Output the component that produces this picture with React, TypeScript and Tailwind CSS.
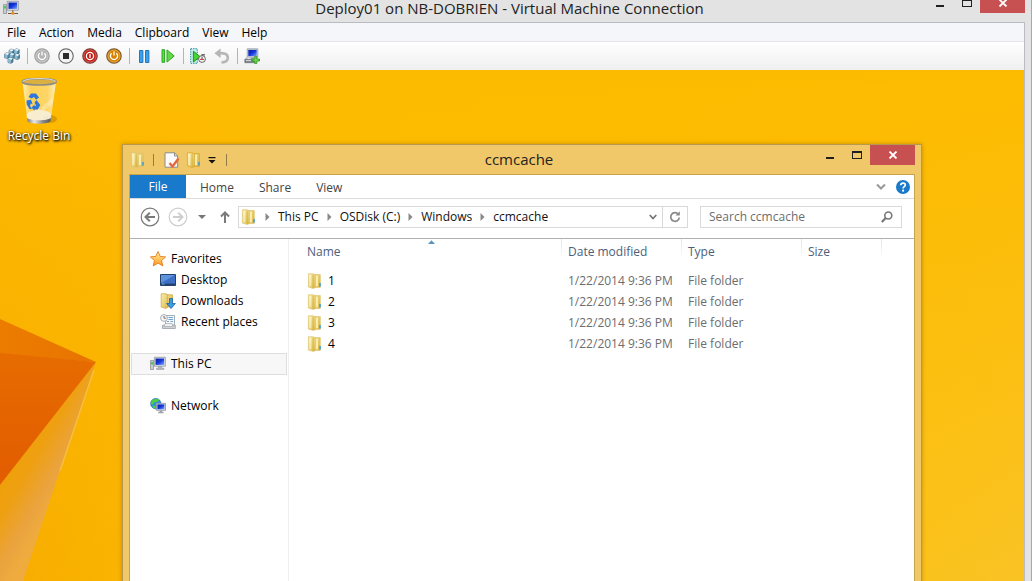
import type { ReactNode } from 'react';

function SharedGradients() {
  return (
    <svg className="absolute size-0" aria-hidden="true">
      <defs>
        <linearGradient id="folderBack" x1="0" y1="0" x2="1" y2="1">
          <stop offset="0" stopColor="#f3e296" />
          <stop offset="1" stopColor="#d9b23e" />
        </linearGradient>
        <linearGradient id="folderFront" x1="0" y1="0" x2="1" y2="1">
          <stop offset="0" stopColor="#fbf0b0" />
          <stop offset="1" stopColor="#dcb945" />
        </linearGradient>
        <linearGradient id="screenBlue" x1="0" y1="0" x2="1" y2="1">
          <stop offset="0" stopColor="#0a1fa8" />
          <stop offset="0.5" stopColor="#1436d8" />
          <stop offset="1" stopColor="#7fa6ff" />
        </linearGradient>
        <linearGradient id="starFill" x1="0" y1="0" x2="0" y2="1">
          <stop offset="0" stopColor="#fff3a0" />
          <stop offset="1" stopColor="#ff9a1e" />
        </linearGradient>
      </defs>
    </svg>
  );
}

function Folder({ outlined = false }: { outlined?: boolean }) {
  const edge = outlined ? '#d9a01a' : '#dcc26c';
  return (
    <svg className="size-4 shrink-0" viewBox="0 0 16 16" aria-hidden="true">
      <path d="M7 1.6h6.300v12.800H7z" fill="url(#folderBack)" stroke={edge} strokeWidth="0.7" />
      <path d="M8 2.800h3v10.500H8z" fill="#fbf2b8" opacity="0.85" />
      <path d="M12.200 10h1.600v3.600h-1.600z" fill="#3f9fe0" />
      <path d="M1.400.8H6l2.400 1v12.600L6.600 15.600 1.400 14z" fill="url(#folderFront)" stroke={edge} strokeWidth="0.7" />
      <path d="M2.300 1.800h2v11.400h-2z" fill="#fffbe0" opacity="0.55" />
      <path d="M6.100 1.800v13.200" stroke="#d3ad38" strokeWidth="0.8" />
    </svg>
  );
}

function Computer({ network = false }: { network?: boolean }) {
  return (
    <svg className="size-4 shrink-0" viewBox="0 0 16 16" aria-hidden="true">
      <path d="M.5 4.5h3v9h-3z" fill="#c9ccd0" stroke="#84898f" strokeWidth="0.7" />
      <path d="M1.2 6h1.6v2.6H1.2z" fill="#36c23a" />
      <path d="M4.3 1.3h11v8.9h-11z" fill="#dfe4ea" stroke="#7f8790" strokeWidth="0.7" />
      <path d="M5.5 2.5h8.6v6.4H5.5z" fill="url(#screenBlue)" />
      {network ? (
        <>
          <path d="M9.8 10.3v3M5 13.5h10" stroke="#6f5a3c" strokeWidth="1" />
          <circle cx="9.8" cy="13.3" r="1.5" fill="#f08a1c" />
        </>
      ) : (
        <path d="M8.5 10.4h3l.5 1.8h2V13.5H6.4v-1.3h1.8z" fill="#aeb4bb" stroke="#858c94" strokeWidth="0.4" />
      )}
    </svg>
  );
}

function Star() {
  return (
    <svg className="size-4 shrink-0" viewBox="0 0 16 16" aria-hidden="true">
      <path d="m8 .5 2.2 4.900 5.400.5-4.100 3.600 1.300 5.400L8 12.100l-4.800 2.800 1.300-5.400L.4 5.900l5.400-.5z" fill="url(#starFill)" stroke="#e9781c" strokeWidth="0.9" strokeLinejoin="round" />
    </svg>
  );
}

function DesktopIcon() {
  return (
    <svg className="size-4 shrink-0" viewBox="0 0 16 16" aria-hidden="true">
      <path d="M.5 2.5h15v11H.5z" fill="#3c70c4" stroke="#26406c" />
      <path d="M1 3h14L1 11z" fill="#5d93dd" />
      <path d="M1 11.6h14V13H1z" fill="#24406d" />
      <path d="M2 12h2.5" stroke="#8ad0ff" strokeWidth="0.8" />
    </svg>
  );
}

function Downloads() {
  return (
    <svg className="size-4 shrink-0" viewBox="0 0 16 16" aria-hidden="true">
      <path d="M6 1.800h6.500v12H6z" fill="url(#folderBack)" stroke="#cfab48" strokeWidth="0.8" />
      <path d="M1.200.8H6l1.600 1v12.600l-1.800 1.100-4.600-1.500z" fill="url(#folderFront)" stroke="#cfab48" strokeWidth="0.8" />
      <path d="M9.500 5.500h3v5h2.900L11 15.500l-4.400-5h2.900z" fill="#3f9ae0" stroke="#1b66ad" strokeWidth="0.8" />
    </svg>
  );
}

function RecentPlaces() {
  return (
    <svg className="size-4 shrink-0" viewBox="0 0 16 16" aria-hidden="true">
      <path d="M5.5 1.5h9v9.8h-9z" fill="#f4f8fb" stroke="#8f9aa5" strokeWidth="0.8" />
      <path d="M8.5 3.5H13M8.5 5.5H13M7 7.5h2M10.5 7.5H13" stroke="#6ba4d2" strokeWidth="1" />
      <path d="M2.5 11.2h12.8v3.3H2.5z" fill="#cfd3d6" stroke="#9a9fa4" strokeWidth="0.8" />
      <path d="M5 9.5h7l1 3H4z" fill="#eef0f2" stroke="#9aa0a6" strokeWidth="0.6" />
      <circle cx="4" cy="4" r="3.4" fill="#f7f7f7" stroke="#a0a4a8" strokeWidth="0.9" />
      <path d="M4 2v2.2h1.8" fill="none" stroke="#4a4f55" strokeWidth="0.8" />
    </svg>
  );
}

function NetworkIcon() {
  return (
    <svg className="size-4 shrink-0" viewBox="0 0 16 16" aria-hidden="true">
      <circle cx="5.800" cy="5.600" r="5.200" fill="#2c8fe0" stroke="#1d5a9f" strokeWidth="0.6" />
      <path d="M2 2.600C4 .7 8 .6 9.200 2L7 4 4 4.400 2.800 6.800.8 6zM3 7.500l3 .6L5.500 10.600 2.600 9.500z" fill="#4fd03d" />
      <path d="M6.300 5.300h9.200v7H6.300z" fill="#d6dbe2" stroke="#7e8791" strokeWidth="0.7" />
      <path d="M7.400 6.400h7v4.800h-7z" fill="url(#screenBlue)" />
      <path d="M9.700 12.400h2.400v1.400h1.500v1.400H8.200v-1.400h1.500z" fill="#9ba2aa" />
    </svg>
  );
}

function Cluster() {
  return (
    <svg className="size-4" viewBox="0 0 16 16" aria-hidden="true" stroke="#2d5266" strokeWidth="0.6" strokeLinejoin="round">
      {[[5, 1], [10.2, 0.8], [0.4, 4.8], [5.6, 5], [10.6, 5.8], [4, 9.6]].map(([x, y]) => (
        <g key={`${x}-${y}`}>
          <path d={`M${x} ${y + 1.4}l2-1.400 3 .8v3.600l-2 1.300-3-.8z`} fill="#4d86a3" />
          <path d={`M${x} ${y + 1.4}l2-1.400 3 .8-2 1.600z`} fill="#e4f3fa" stroke="none" />
          <path d={`M${x} ${y + 1.4}l3 .9v3.400l-3-.8z`} fill="#8bb8cd" stroke="none" />
        </g>
      ))}
    </svg>
  );
}

function RoundIcon({ kind }: { kind: 'start' | 'stop' | 'shutdown' | 'save' }) {
  const face = { start: '#b3b3b3', stop: '#f3f3f3', shutdown: '#c2190f', save: '#d98200' }[kind];
  const rim = { start: '#9f9f9f', stop: '#6b6b6b', shutdown: '#7e3a34', save: '#7c5a28' }[kind];
  return (
    <svg className="size-4" viewBox="0 0 16 16" aria-hidden="true">
      <circle cx="8" cy="8" r="7.2" fill={face} stroke={rim} strokeWidth="1.2" />
      <circle cx="8" cy="8" r="6.1" fill="none" stroke="#fff" strokeWidth="0.6" opacity="0.5" />
      {kind === 'stop' && <path d="M5 5h6v6H5z" fill="#2c2c2c" />}
      {kind === 'shutdown' && (
        <g fill="none" stroke="#fff" strokeWidth="1.3">
          <circle cx="8" cy="8" r="3.6" />
          <path d="M8 6v4" />
        </g>
      )}
      {(kind === 'start' || kind === 'save') && (
        <path d="M8 3.6v4M5.6 5.2a3.6 3.6 0 1 0 4.8 0" fill="none" stroke="#fff" strokeWidth="1.3" />
      )}
    </svg>
  );
}

function Pause() {
  return (
    <svg className="size-4" viewBox="0 0 16 16" aria-hidden="true" fill="#35a2f0" stroke="#1b6cb5" strokeWidth="0.9">
      <path d="M3.5 2.500h3.400v12H3.500zM9.500 2.500h3.400v12H9.500z" />
    </svg>
  );
}

function Resume() {
  return (
    <svg className="size-4" viewBox="0 0 16 16" aria-hidden="true" fill="#5fd945" stroke="#2ba823" strokeWidth="1">
      <path d="M2 1.7h2.6v12.6H2zM7 1.9 14.2 8 7 14.1z" />
    </svg>
  );
}

function Checkpoint() {
  return (
    <svg className="size-4" viewBox="0 0 16 16" aria-hidden="true">
      <path d="M.7.7h6.600v14.600H.7z" fill="#c4eef0" stroke="#2f8b93" strokeDasharray="1.400 1" />
      <path d="M3.400 3.200 10 8.600l-6.600 5.400z" fill="#45d52f" stroke="#118a16" strokeWidth="0.9" />
      <circle cx="12" cy="11" r="3.400" fill="#f8f8f8" stroke="#555" strokeWidth="0.9" />
      <path d="M10 11.400h4" stroke="#d0342c" />
      <path d="M12 8.800v2.400" stroke="#222" strokeWidth="0.8" />
      <path d="M11.500 6.800h3.400" stroke="#444" strokeWidth="1.2" />
    </svg>
  );
}

function Revert() {
  return (
    <svg className="size-4" viewBox="0 0 16 16" aria-hidden="true">
      <path d="M4.500 5.200c5-.4 9.300.4 9.300 4.600 0 2.900-2.400 4.600-6.300 4.600" fill="none" stroke="#b6b6b6" strokeWidth="2.600" />
      <path d="M6.600.4v9.600L.4 5.200z" fill="#b6b6b6" />
    </svg>
  );
}

function EnhancedSession() {
  return (
    <svg className="size-4" viewBox="0 0 16 16" aria-hidden="true">
      <path d="M3.200.8h10.600v8.400H3.200z" fill="#cfd5dd" stroke="#8a9098" strokeWidth="0.7" />
      <path d="M4.300 1.900h8.400v6.200H4.300z" fill="url(#screenBlue)" />
      <path d="M6.500 9.400h4v1.800h-4z" fill="#a5abb2" />
      <path d="M1.500 9.500h2v2h-2z" fill="#b8bdc3" />
      <path d="M.8 11.300h9.500v3.400H.8z" fill="#7d848c" stroke="#5a6067" strokeWidth="0.6" />
      <path d="M2 12.500h5" stroke="#d3d7dc" />
      <path d="M10.800 8.300h2v2.700h2.700v2h-2.700v2.700h-2V13H8.100v-2h2.700z" fill="#6fdc48" stroke="#2c8f1d" strokeWidth="0.8" />
    </svg>
  );
}

function RecycleBin() {
  return (
    <svg className="h-12 w-10" viewBox="0 0 40 48" aria-hidden="true">
      <defs>
        <linearGradient id="binGlass" x1="0" y1="0" x2="1" y2="0">
          <stop offset="0" stopColor="#fff" stopOpacity="0.75" />
          <stop offset="0.25" stopColor="#fff" stopOpacity="0.35" />
          <stop offset="0.75" stopColor="#fff" stopOpacity="0.4" />
          <stop offset="1" stopColor="#fff" stopOpacity="0.75" />
        </linearGradient>
        <linearGradient id="binBase" x1="0" y1="0" x2="1" y2="0">
          <stop offset="0" stopColor="#777" />
          <stop offset="0.3" stopColor="#e9e9e9" />
          <stop offset="0.65" stopColor="#8d8d8d" />
          <stop offset="1" stopColor="#555" />
        </linearGradient>
      </defs>
      <ellipse cx="31" cy="42" rx="7" ry="4" fill="#a56f00" opacity="0.4" />
      <path d="M3.500 5 8.400 43c3 3.400 20.200 3.400 23.200 0L37 5z" fill="url(#binGlass)" />
      <path d="M7.500 37c4-4 8-3 12-5 5 2 9 1 12.500 5l-.8 6c-3 3-20 3-23 0z" fill="#f5f5f5" opacity="0.75" />
      <path d="M34 20 22 31l2 3 9-7z" fill="#fff" opacity="0.3" />
      <path d="M8 41c4 3 20 3 24 0l-.6 3.600c-4 3-18.800 3-22.800 0z" fill="url(#binBase)" />
      <ellipse cx="20.200" cy="4.800" rx="17" ry="3.200" fill="#dbb040" stroke="#8c8c86" strokeWidth="1.600" />
      <path d="M3.500 4.500c4-4 29-4 33.500 0" fill="none" stroke="#e4e4e4" strokeWidth="0.9" />
      <g fill="#2d77dc">
        <path d="m9.500 20 2.500-3.600h5l3 4-3 2.400-2-2.800-2.500 1.600z" />
        <path d="m7.500 23.500 4.500-.8 1.600 4.600-1.800-.8-.8 2.400 2 3H10.500l-2.800-4.400z" />
        <path d="m17.500 23 3.800 5-2.500 4.500h-3.300v1.300l-3-3.300 3-3v1.500h1.700l-1.700-3.600z" />
      </g>
    </svg>
  );
}

function MinimizeGlyph() {
  return (
    <svg className="h-2 w-2.5" viewBox="0 0 10 8" aria-hidden="true">
      <path d="M1 6h8v2H1z" fill="#1f1f1f" />
    </svg>
  );
}

function MaximizeGlyph() {
  return (
    <svg className="h-2 w-2.5" viewBox="0 0 10 8" aria-hidden="true">
      <path d="M0 0h10v8H0zM1 2v5h8V2z" fill="#1f1f1f" fillRule="evenodd" />
    </svg>
  );
}

function CloseGlyph() {
  return (
    <svg className="h-2 w-2.5" viewBox="0 0 10 8" aria-hidden="true">
      <path d="m1.500.5 7 7m0-7-7 7" stroke="#fff" strokeWidth="1.800" />
    </svg>
  );
}

function WindowButtons() {
  return (
    <div className="flex h-5 justify-self-end">
      <button aria-label="Minimize" className="flex w-[27px] items-center justify-center"><MinimizeGlyph /></button>
      <button aria-label="Maximize" className="flex w-[27px] items-center justify-center"><MaximizeGlyph /></button>
      <button aria-label="Close" className="flex w-[45px] items-center justify-center bg-[#c75050]"><CloseGlyph /></button>
    </div>
  );
}

function ToolButton({ label, children }: { label: string; children: ReactNode }) {
  return (
    <button aria-label={label} className="flex size-6 shrink-0 items-center justify-center">
      {children}
    </button>
  );
}

function ToolSeparator() {
  return (
    <span className="flex w-1.5 shrink-0 justify-center">
      <span className="h-4 w-px bg-[#b4b4b4]" />
    </span>
  );
}

function ConnectionBars() {
  return (
    <>
      <header className="grid h-[22px] shrink-0 grid-cols-[1fr_auto_1fr] pr-1.5">
        <span className="pl-[3px]"><Computer network /></span>
        <h1 className="h-4 pr-1.5 text-[15px] leading-4 text-[#222]">Deploy01 on NB-DOBRIEN - Virtual Machine Connection</h1>
        <div className="-mt-[7px] flex justify-end"><WindowButtons /></div>
      </header>
      <div className="mr-1.5 shrink-0 border-t border-r border-[#b9bcc0]">
        <nav aria-label="Menu" className="flex h-[19px] items-end gap-[13px] border-b border-[#e4e6e9] bg-[#f4f6f9] pl-[7px] leading-4">
          {['File', 'Action', 'Media', 'Clipboard', 'View', 'Help'].map((item) => (
            <button key={item}>{item}</button>
          ))}
        </nav>
        <div role="toolbar" className="flex h-7 items-center bg-linear-to-b from-white to-[#efefef]">
          <ToolButton label="Ctrl+Alt+Delete"><Cluster /></ToolButton>
          <ToolSeparator />
          <ToolButton label="Start"><RoundIcon kind="start" /></ToolButton>
          <ToolButton label="Turn off"><RoundIcon kind="stop" /></ToolButton>
          <ToolButton label="Shut down"><RoundIcon kind="shutdown" /></ToolButton>
          <ToolButton label="Save"><RoundIcon kind="save" /></ToolButton>
          <ToolSeparator />
          <ToolButton label="Pause"><Pause /></ToolButton>
          <ToolButton label="Reset"><Resume /></ToolButton>
          <ToolSeparator />
          <ToolButton label="Checkpoint"><Checkpoint /></ToolButton>
          <ToolButton label="Revert"><Revert /></ToolButton>
          <ToolSeparator />
          <ToolButton label="Enhanced session"><EnhancedSession /></ToolButton>
        </div>
      </div>
    </>
  );
}

function Wallpaper() {
  return (
    <svg className="absolute top-[240px] left-0 h-[350px] w-[100px]" viewBox="0 0 100 350" aria-hidden="true">
      <defs>
        <linearGradient id="facetTop" x1="0" y1="0" x2="1" y2="0">
          <stop offset="0" stopColor="#ec7c00" />
          <stop offset="1" stopColor="#e87400" />
        </linearGradient>
        <linearGradient id="facetDark" x1="0" y1="0" x2="0" y2="1">
          <stop offset="0" stopColor="#e66c00" />
          <stop offset="1" stopColor="#e25c00" />
        </linearGradient>
        <linearGradient id="facetPale" gradientUnits="userSpaceOnUse" x1="10" y1="150" x2="62" y2="180">
          <stop offset="0" stopColor="#eea008" />
          <stop offset="0.35" stopColor="#eea012" />
          <stop offset="0.75" stopColor="#eaa33e" />
          <stop offset="1" stopColor="#efab3e" />
        </linearGradient>
      </defs>
      <path d="M96 52 0 175v165z" fill="url(#facetPale)" />
      <path d="M96 52 0 9v36z" fill="url(#facetTop)" />
      <path d="M0 43 96 52 0 175z" fill="url(#facetDark)" />
      <path d="M94 60 60 161" stroke="#f7c250" strokeWidth="1.500" opacity="0.8" />
    </svg>
  );
}

function TitleBar() {
  return (
    <div className="grid h-[29px] grid-cols-[1fr_auto_1fr]">
      <div className="flex h-[29px] items-center pl-px">
        <Folder />
        <span className="ml-[7px] h-3 w-px bg-[#8f7a48]" />
        <button aria-label="Properties" className="ml-2.5">
          <svg className="size-4" viewBox="0 0 16 16" aria-hidden="true">
            <path d="M1 .8h9.500l3.200 3.200v11.200H1z" fill="#fbfbfb" stroke="#8b8b8b" />
            <path d="M10.500.8V4h3.200" fill="none" stroke="#8b8b8b" />
            <path d="m5.500 11 3 3.500L14.500 6.500" fill="none" stroke="#e8673c" strokeWidth="2.400" />
          </svg>
        </button>
        <button aria-label="New folder" className="ml-1.5"><Folder outlined /></button>
        <button aria-label="Customize Quick Access Toolbar" className="ml-1.5">
          <svg className="h-2 w-2" viewBox="0 0 8 8" aria-hidden="true">
            <path d="M.5 1h7v1.200h-7zM.5 4h7L4 7.500z" fill="#111" />
          </svg>
        </button>
        <span className="ml-2.5 h-3 w-px bg-[#8f7a48]" />
      </div>
      <h2 className="pr-1.5 text-[15px] leading-7 text-[#222]">ccmcache</h2>
      <WindowButtons />
    </div>
  );
}

function Ribbon() {
  return (
    <div className="flex h-6 items-stretch border-b border-[#dadbdc] text-[#444]">
      <button className="w-14 bg-[#1979ca] text-white">File</button>
      <div className="ml-[14px] flex flex-1 items-center gap-[25px] pt-0.5">
        <button>Home</button>
        <button>Share</button>
        <button>View</button>
      </div>
      <button aria-label="Expand the Ribbon">
        <svg className="h-2 w-2.5" viewBox="0 0 10 8" aria-hidden="true">
          <path d="m1 1.500 4 4 4-4" fill="none" stroke="#999" strokeWidth="2" />
        </svg>
      </button>
      <button aria-label="Help" className="mr-1 ml-2.5">
        <svg className="size-[14px]" viewBox="0 0 14 14" aria-hidden="true">
          <circle cx="7" cy="7" r="7" fill="#1979ca" />
          <path d="M4.800 5.300C4.800 2.300 9.300 2.400 9.300 5c0 1.700-2.200 1.700-2.200 3.500" fill="none" stroke="#fff" strokeWidth="1.700" />
          <circle cx="7.100" cy="10.700" r="1.100" fill="#fff" />
        </svg>
      </button>
    </div>
  );
}

function RoundArrow({ faded = false }: { faded?: boolean }) {
  return (
    <svg className={faded ? 'size-5 rotate-180' : 'size-5'} viewBox="0 0 20 20" aria-hidden="true" fill="none" stroke={faded ? '#cecece' : '#7a7a7a'}>
      <circle cx="10" cy="10" r="8.800" strokeWidth="1.200" />
      <path d="M5.800 10H15M9.800 5.700 5.500 10l4.300 4.300" strokeWidth="2" />
    </svg>
  );
}

function Crumb({ label }: { label: string }) {
  return (
    <>
      <svg className="h-2 w-[5px] shrink-0" viewBox="0 0 5 8" aria-hidden="true">
        <path d="M.5 0 4.500 4l-4 4z" fill="#888" />
      </svg>
      <a href="#" className="text-[#111]">{label}</a>
    </>
  );
}

function AddressBar() {
  return (
    <div className="flex h-10 items-center border-b border-[#b0b0b0] px-[10px] pb-[3px]">
      <button aria-label="Back"><RoundArrow /></button>
      <button aria-label="Forward" className="ml-2"><RoundArrow faded /></button>
      <button aria-label="Recent locations" className="ml-2.5">
        <svg className="h-1 w-2" viewBox="0 0 8 4" aria-hidden="true"><path d="M0 0h8L4 4z" fill="#777" /></svg>
      </button>
      <button aria-label="Up" className="ml-3.5">
        <svg className="h-3 w-2.5" viewBox="0 0 10 12" aria-hidden="true" fill="none" stroke="#7a7a7a" strokeWidth="2">
          <path d="M5 12V1.800M1 5.500l4-4 4 4" />
        </svg>
      </button>
      <div className="ml-2 flex h-[22px] min-w-0 flex-1 items-stretch border border-[#d9d9d9]">
        <div className="flex min-w-0 flex-1 items-center gap-2 pl-0.5">
          <Folder />
          {['This PC', 'OSDisk (C:)', 'Windows', 'ccmcache'].map((label) => (
            <Crumb key={label} label={label} />
          ))}
        </div>
        <button aria-label="Previous locations" className="px-[5px]">
          <svg className="h-1.5 w-2" viewBox="0 0 8 6" aria-hidden="true"><path d="m.7 1 3.300 3.500L7.300 1" fill="none" stroke="#777" strokeWidth="1.800" /></svg>
        </button>
        <button aria-label="Refresh" className="flex w-[25px] items-center justify-center border-l border-[#d9d9d9]">
          <svg className="size-3" viewBox="0 0 12 12" aria-hidden="true">
            <path d="M9.300 3.200A4.300 4.300 0 1 0 10.300 6.500" fill="none" stroke="#888" strokeWidth="1.700" />
            <path d="M6.500 4.500h4.300V.3z" fill="#888" />
          </svg>
        </button>
      </div>
      <div className="mr-[2px] ml-3 flex h-[22px] w-[202px] items-center border border-[#d9d9d9] pr-2 pl-2">
        <input aria-label="Search ccmcache" placeholder="Search ccmcache" className="min-w-0 flex-1 outline-none placeholder:text-[#6d6d6d]" />
        <svg className="size-3 shrink-0" viewBox="0 0 12 12" aria-hidden="true" fill="none" stroke="#777">
          <circle cx="7.300" cy="4.500" r="3.500" strokeWidth="1.600" />
          <path d="M4.800 7 .8 11" strokeWidth="2.200" />
        </svg>
      </div>
    </div>
  );
}

function TreeItem({ icon, label, nested = false }: { icon: ReactNode; label: string; nested?: boolean }) {
  return (
    <a href="#" className={nested ? 'flex h-[21px] items-center gap-[5px] pl-[30px]' : 'flex h-[21px] items-center gap-[5px] pl-5'}>
      {icon}
      {label}
    </a>
  );
}

function NavigationPane() {
  return (
    <nav aria-label="Locations" className="w-[159px] shrink-0 border-r border-[#f0f0f0] pt-[9px] whitespace-nowrap">
      <TreeItem icon={<Star />} label="Favorites" />
      <TreeItem nested icon={<DesktopIcon />} label="Desktop" />
      <TreeItem nested icon={<Downloads />} label="Downloads" />
      <TreeItem nested icon={<RecentPlaces />} label="Recent places" />
      <a href="#" className="mt-[21px] mr-px ml-px flex h-[22px] items-center gap-[5px] border border-[#dedede] bg-[#f7f7f7] pl-[18px]">
        <Computer />
        This PC
      </a>
      <div className="mt-5"><TreeItem icon={<NetworkIcon />} label="Network" /></div>
    </nav>
  );
}

const columnLine = 'bg-[linear-gradient(#dbe6f2,#fff)] bg-[length:1px_20px] bg-right-top bg-no-repeat';

function FileTable() {
  return (
    <div className="min-w-0 flex-1">
      <table className="w-full table-fixed text-left">
        <colgroup>
          <col className="w-[273px]" />
          <col className="w-[120px]" />
          <col className="w-[120px]" />
          <col className="w-[80px]" />
          <col />
        </colgroup>
        <thead className="text-[#4c607a]">
          <tr className="h-[31px]">
            <th className={`relative pb-[5px] pl-[18px] font-normal ${columnLine}`}>
              Name
              <svg className="absolute top-px left-[139px] h-1 w-[7px]" viewBox="0 0 7 4" aria-hidden="true"><path d="M0 4h7L3.500.3z" fill="#5b93b8" /></svg>
            </th>
            <th className={`pb-[5px] pl-1.5 font-normal ${columnLine}`}>Date modified</th>
            <th className={`pb-[5px] pl-1.5 font-normal ${columnLine}`}>Type</th>
            <th className={`pb-[5px] pl-1.5 font-normal ${columnLine}`}>Size</th>
            <td />
          </tr>
        </thead>
        <tbody className="text-[#6d6d6d]">
          {['1', '2', '3', '4'].map((name) => (
            <tr key={name} className="h-[21px]">
              <td className="pl-[18px] text-black">
                <span className="flex items-center gap-[5px]"><Folder />{name}</span>
              </td>
              <td className="pl-1.5 whitespace-nowrap">1/22/2014 9:36 PM</td>
              <td className="pl-1.5">File folder</td>
              <td />
              <td />
            </tr>
          ))}
        </tbody>
      </table>
    </div>
  );
}

function ExplorerWindow() {
  return (
    <section className="absolute top-[74px] right-[102px] -bottom-2 left-[122px] flex flex-col border border-[#b8984c] bg-[#f0c869] px-1.5 shadow-[0_0_4px_rgba(120,80,0,0.45)]">
      <TitleBar />
      <div className="flex flex-1 flex-col border border-[#c9a44d] bg-white">
        <Ribbon />
        <AddressBar />
        <div className="flex flex-1">
          <NavigationPane />
          <FileTable />
        </div>
      </div>
    </section>
  );
}

export default function App() {
  return (
    <div className="flex h-screen flex-col overflow-hidden border-r border-[#a8a8a8] bg-[#e3e3e3] font-['Open_Sans','Noto_Sans',sans-serif] text-[12px] leading-4 text-black">
      <SharedGradients />
      <ConnectionBars />
      <main className="relative mr-1.5 flex-1 overflow-hidden border-r border-[#b9bcc0] bg-[linear-gradient(100deg,#f6a700_0%,#fcbb00_30%,#fdc000_60%,#fac325_100%)]">
        <div className="absolute inset-0 bg-linear-to-b from-[#fdbb00] to-transparent" />
        <Wallpaper />
        <button className="absolute top-[7px] left-0 flex w-[78px] flex-col items-center gap-[3px] text-white">
          <RecycleBin />
          <span className="[text-shadow:1px_1px_2px_#000,0_1px_3px_#000]">Recycle Bin</span>
        </button>
        <ExplorerWindow />
      </main>
    </div>
  );
}
